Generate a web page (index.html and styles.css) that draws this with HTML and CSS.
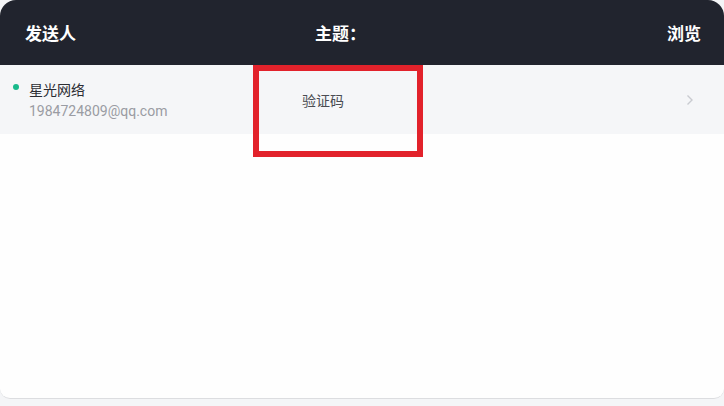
FILE: index.html
```html
<!DOCTYPE html>
<html lang="zh">
<head>
<meta charset="utf-8">
<link rel="stylesheet" href="styles.css">
</head>
<body>
<div class="card">
  <div class="head">
    <span class="h-from">发送人</span>
    <span class="h-subj">主题：</span>
    <span class="h-view">浏览</span>
  </div>
  <div class="row">
    <div class="from">
      <span class="dot"></span>
      <div class="sender">
        <div class="name">星光网络</div>
        <div class="mail">1984724809@qq.com</div>
      </div>
    </div>
    <div class="subj">验证码</div>
    <svg class="chev" width="8" height="12" viewBox="0 0 8 12"><path d="M1.5 1.5 L6 6 L1.5 10.5" fill="none" stroke="#c9cbd0" stroke-width="1.4"/></svg>
  </div>
  <div class="mark"></div>
</div>
</body>
</html>
```
FILE: styles.css
```css
html, body {
  margin: 0;
  padding: 0;
  background: #f4f5f7;
}
body {
  width: 724px;
  height: 406px;
  overflow: hidden;
  font-family: "Noto Sans CJK SC", "Noto Sans", sans-serif;
}
.card {
  position: relative;
  height: 399px;
  background: #fefefe;
  border-radius: 16px 16px 10px 10px;
  border-bottom: 1px solid #dcdde0;
  box-sizing: border-box;
  overflow: hidden;
}
.head {
  height: 65px;
  background: #21242e;
  display: grid;
  grid-template-columns: 290px 1fr auto;
  align-items: center;
  padding: 0 23px 0 25px;
  color: #ffffff;
  font-size: 17px;
  font-weight: 700;
}
.row {
  height: 69px;
  background: #f5f6f8;
  display: grid;
  grid-template-columns: 289px 1fr auto;
  align-items: center;
  padding: 0 30px 0 13px;
}
.from {
  display: flex;
  align-items: flex-start;
  gap: 10px;
  margin-top: 1px;
}
.dot {
  width: 6px;
  height: 6px;
  border-radius: 50%;
  background: #19b98b;
  margin-top: 5px;
}
.name {
  font-size: 14px;
  line-height: 20px;
  color: #2b2d33;
}
.mail {
  font-family: Roboto, "Noto Sans", sans-serif;
  font-size: 14px;
  line-height: 20px;
  color: #9a9ca3;
  margin-top: 2px;
}
.subj {
  font-size: 14px;
  color: #4a4c52;
}
.chev {
  display: block;
}
.mark {
  position: absolute;
  left: 253px;
  top: 65px;
  width: 170px;
  height: 92px;
  border: 6px solid #e2222b;
  box-sizing: border-box;
}
```
